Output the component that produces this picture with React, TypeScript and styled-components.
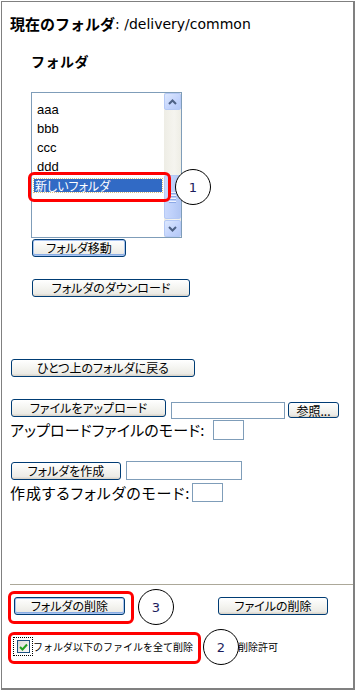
import React from 'react';
import styled, { createGlobalStyle, css } from 'styled-components';

const JP = `"Noto Sans CJK JP", "Liberation Sans", sans-serif`;

const GlobalStyle = createGlobalStyle`
  html, body {
    margin: 0;
    padding: 0;
    background: #fff;
  }
  body {
    font-family: "Liberation Sans", "Noto Sans CJK JP", sans-serif;
    color: #000;
  }
`;

const Frame = styled.div`
  position: relative;
  box-sizing: border-box;
  width: 354px;
  height: 689px;
  margin: 1px 0 0 1px;
  border: 1px solid #808080;
  border-right-width: 2px;
  border-bottom-width: 2px;
  display: flex;
  flex-direction: column;
`;

const Row = styled.div<{ $top: number; $left: number; $h: number; $align?: string }>`
  display: flex;
  align-items: ${({ $align }) => $align || 'center'};
  margin-top: ${({ $top }) => $top}px;
  padding-left: ${({ $left }) => $left}px;
  height: ${({ $h }) => $h}px;
  flex-shrink: 0;
`;

const TitleStrong = styled.span`
  font-family: ${JP};
  font-weight: 700;
  font-size: 15px;
  line-height: 20px;
`;

const TitlePath = styled.span`
  font-family: "DejaVu Sans", sans-serif;
  font-size: 14px;
  line-height: 20px;
`;

const Heading = styled.span`
  font-family: ${JP};
  font-weight: 700;
  font-size: 14px;
  line-height: 18px;
  letter-spacing: 0.5px;
`;

/* list box */
const ListBox = styled.div`
  box-sizing: border-box;
  width: 151px;
  height: 146px;
  border: 1px solid #7f9db9;
  display: flex;
  background: #fff;
`;

const Items = styled.div`
  flex: 1;
  padding: 7px 0 0 2px;
`;

const Item = styled.div<{ $selected?: boolean }>`
  height: 19px;
  font-family: "Liberation Sans", "Noto Sans CJK JP", sans-serif;
  font-size: 13px;
  line-height: 19px;
  padding-left: 3px;
  ${({ $selected }) =>
    $selected &&
    css`
      padding: 3px 0 3px 0;
      box-sizing: border-box;
    `}
`;

const Highlight = styled.div`
  box-sizing: border-box;
  width: 128px;
  height: 13px;
  background: #316ac5;
  color: #fff;
  outline: 1px dotted #d8c080;
  font-family: ${JP};
  font-size: 12px;
  line-height: 13px;
  padding-left: 1px;
  font-feature-settings: "palt";
  white-space: nowrap;
`;

const ScrollBar = styled.div`
  width: 17px;
  display: flex;
  flex-direction: column;
  background: linear-gradient(to right, #eeede5, #f5f4ef 60%, #eeede5);
`;

const ScrollBtn = styled.div`
  box-sizing: border-box;
  width: 17px;
  height: 17px;
  border: 1px solid #b5c9f5;
  border-radius: 2px;
  background: linear-gradient(135deg, #dde8fe, #c2d3fc 60%, #b4c8f6);
  display: flex;
  align-items: center;
  justify-content: center;
  flex-shrink: 0;
`;

const Track = styled.div`
  flex: 1;
  display: flex;
  flex-direction: column;
  justify-content: flex-end;
  padding-bottom: 1px;
`;

const Thumb = styled.div`
  box-sizing: border-box;
  height: 44px;
  border: 1px solid #b5c9f5;
  border-radius: 2px;
  background: linear-gradient(to right, #c9d8fc, #bed0fa 50%, #b2c6f4);
  display: flex;
  flex-direction: column;
  align-items: center;
  justify-content: center;
  gap: 1px;
`;

const Grip = styled.div`
  width: 7px;
  height: 1px;
  background: #eef3fe;
  border-bottom: 1px solid #8ca8e6;
`;

/* buttons */
const Button = styled.button<{ $w: number; $focus?: boolean }>`
  box-sizing: border-box;
  width: ${({ $w }) => $w}px;
  height: 18px;
  padding: 0;
  border: 1px solid #003c74;
  border-radius: 3px;
  background: linear-gradient(#ffffff, #f4f4f0 50%, #ecebe6 85%, #d6d0c5);
  font-family: ${JP};
  font-size: 12px;
  line-height: 16px;
  color: #000;
  font-feature-settings: "palt";
  flex-shrink: 0;
  ${({ $focus }) =>
    $focus &&
    css`
      box-shadow: inset 0 0 0 1px #a9c4f0, inset 0 -1px 0 1px #89ade4;
    `}
`;

const TextInput = styled.div<{ $w: number; $h: number; $top?: number }>`
  box-sizing: border-box;
  width: ${({ $w }) => $w}px;
  height: ${({ $h }) => $h}px;
  margin-top: ${({ $top }) => $top || 0}px;
  border: 1px solid #7f9db9;
  background: #fff;
  flex-shrink: 0;
`;

const ModeLabel = styled.span<{ $w: number; $ls: number }>`
  width: ${({ $w }) => $w}px;
  font-family: ${JP};
  font-size: 15px;
  line-height: 20px;
  letter-spacing: ${({ $ls }) => $ls}px;
  font-feature-settings: "palt";
  white-space: nowrap;
  flex-shrink: 0;
`;

const Rule = styled.div`
  margin: 82px 0 0 8px;
  height: 1px;
  background: #aca899;
  flex-shrink: 0;
`;

const FocusBox = styled.div`
  box-sizing: border-box;
  width: 20px;
  height: 19px;
  border: 1px dotted #000;
  display: flex;
  align-items: center;
  justify-content: center;
  flex-shrink: 0;
`;

const CheckBox = styled.div`
  box-sizing: border-box;
  width: 13px;
  height: 13px;
  border: 1px solid #1c5180;
  background: linear-gradient(135deg, #dcdcd7, #fbfbf9);
  display: flex;
  align-items: center;
  justify-content: center;
`;

const SmallText = styled.span<{ $gap?: number }>`
  font-family: ${JP};
  font-size: 10px;
  line-height: 14px;
  white-space: nowrap;
  margin-left: ${({ $gap }) => $gap || 0}px;
`;

/* annotations */
const RedBox = styled.div<{ $x: number; $y: number; $w: number; $h: number }>`
  position: absolute;
  left: ${({ $x }) => $x}px;
  top: ${({ $y }) => $y}px;
  width: ${({ $w }) => $w}px;
  height: ${({ $h }) => $h}px;
  box-sizing: border-box;
  border: 3px solid #ff0000;
  border-radius: 6px;
  pointer-events: none;
`;

const Marker = styled.div<{ $x: number; $y: number }>`
  position: absolute;
  left: ${({ $x }) => $x}px;
  top: ${({ $y }) => $y}px;
  width: 36px;
  height: 36px;
  box-sizing: border-box;
  border: 1px solid #000;
  border-radius: 50%;
  background: #fff;
  display: flex;
  align-items: center;
  justify-content: center;
  font-family: "DejaVu Sans", sans-serif;
  font-size: 13px;
  color: #1c1c5c;
`;

const Arrow = ({ up }: { up?: boolean }) => (
  <svg width="9" height="6" viewBox="0 0 9 6">
    <path
      d={up ? 'M1 5 L4.5 1.5 L8 5' : 'M1 1 L4.5 4.5 L8 1'}
      fill="none"
      stroke="#4d6185"
      strokeWidth="2"
    />
  </svg>
);

const folders = ['aaa', 'bbb', 'ccc', 'ddd'];

export default function App() {
  return (
    <>
      <GlobalStyle />
      <Frame>
        <Row $top={12} $left={8} $h={20}>
          <TitleStrong>現在のフォルダ</TitleStrong>
          <TitlePath>: /delivery/common</TitlePath>
        </Row>

        <Row $top={18} $left={29} $h={18}>
          <Heading>フォルダ</Heading>
        </Row>

        <Row $top={22} $left={29} $h={146} $align="flex-start">
          <ListBox>
            <Items>
              {folders.map((f) => (
                <Item key={f}>{f}</Item>
              ))}
              <Item $selected>
                <Highlight>新しいフォルダ</Highlight>
              </Item>
            </Items>
            <ScrollBar>
              <ScrollBtn>
                <Arrow up />
              </ScrollBtn>
              <Track>
                <Thumb>
                  <Grip />
                  <Grip />
                  <Grip />
                  <Grip />
                </Thumb>
              </Track>
              <ScrollBtn>
                <Arrow />
              </ScrollBtn>
            </ScrollBar>
          </ListBox>
        </Row>

        <Row $top={0} $left={30} $h={19}>
          <Button $w={94} $focus>フォルダ移動</Button>
        </Row>

        <Row $top={22} $left={30} $h={18}>
          <Button $w={158}>フォルダのダウンロード</Button>
        </Row>

        <Row $top={62} $left={9} $h={18}>
          <Button $w={184}>ひとつ上のフォルダに戻る</Button>
        </Row>

        <Row $top={22} $left={9} $h={20} $align="flex-start">
          <Button $w={155}>ファイルをアップロード</Button>
          <TextInput $w={114} $h={17} $top={3} style={{ marginLeft: 5 }} />
          <Button $w={51} style={{ marginLeft: 3, marginTop: 3, height: 16 }}>
            参照...
          </Button>
        </Row>

        <Row $top={1} $left={8} $h={20}>
          <ModeLabel $w={203} $ls={0.15}>アップロードファイルのモード:</ModeLabel>
          <TextInput $w={31} $h={20} />
        </Row>

        <Row $top={21} $left={9} $h={19}>
          <Button $w={110}>フォルダを作成</Button>
          <TextInput $w={116} $h={19} style={{ marginLeft: 5 }} />
        </Row>

        <Row $top={3} $left={8} $h={19}>
          <ModeLabel $w={182} $ls={0.9}>作成するフォルダのモード:</ModeLabel>
          <TextInput $w={31} $h={19} />
        </Row>

        <Rule />

        <Row $top={12} $left={12} $h={18}>
          <Button $w={111} $focus>フォルダの削除</Button>
          <Button $w={110} style={{ marginLeft: 93 }}>ファイルの削除</Button>
        </Row>

        <Row $top={22} $left={11} $h={19}>
          <FocusBox>
            <CheckBox>
              <svg width="9" height="8" viewBox="0 0 9 8">
                <path d="M1 4 L3.5 6.5 L8 1.5" fill="none" stroke="#21a121" strokeWidth="2" />
              </svg>
            </CheckBox>
          </FocusBox>
          <SmallText>フォルダ以下のファイルを全て削除</SmallText>
          <SmallText $gap={45}>削除許可</SmallText>
        </Row>

        <RedBox $x={26} $y={170} $w={143} $h={30} />
        <Marker $x={173} $y={167}>1</Marker>

        <RedBox $x={6} $y={589} $w={126} $h={33} />
        <Marker $x={136} $y={587}>3</Marker>

        <RedBox $x={6} $y={630} $w={193} $h={32} />
        <Marker $x={201} $y={627}>2</Marker>
      </Frame>
    </>
  );
}
